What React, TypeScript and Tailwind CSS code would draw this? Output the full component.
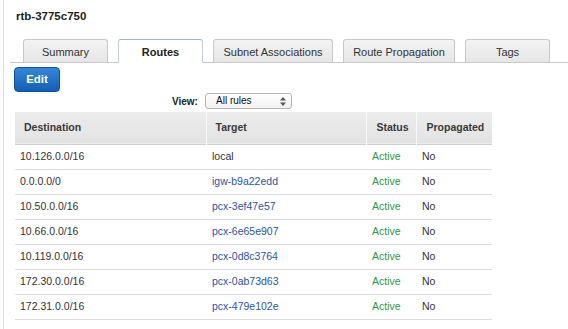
const font = { fontFamily: '"Liberation Sans", Arial, sans-serif' };

const tabs = [
  { label: "Summary", w: "w-[85px]" },
  { label: "Routes", w: "w-[85px]", active: true },
  { label: "Subnet Associations", w: "w-[120px]" },
  { label: "Route Propagation", w: "w-[112px]" },
  { label: "Tags", w: "w-[85px]" },
];

const routes = [
  { dest: "10.126.0.0/16", target: "local", link: false },
  { dest: "0.0.0.0/0", target: "igw-b9a22edd", link: true },
  { dest: "10.50.0.0/16", target: "pcx-3ef47e57", link: true },
  { dest: "10.66.0.0/16", target: "pcx-6e65e907", link: true },
  { dest: "10.119.0.0/16", target: "pcx-0d8c3764", link: true },
  { dest: "172.30.0.0/16", target: "pcx-0ab73d63", link: true },
  { dest: "172.31.0.0/16", target: "pcx-479e102e", link: true },
];

function SelectArrows() {
  return (
    <svg width="6" height="9" viewBox="0 0 6 9" className="absolute right-[5px] top-[3px]">
      <path d="M3 0 L6 3.5 L0 3.5 Z" fill="#555" />
      <path d="M3 9 L6 5.5 L0 5.5 Z" fill="#555" />
    </svg>
  );
}

export default function App() {
  return (
    <div className="w-[568px] h-[329px] bg-white overflow-hidden text-[#333]" style={font}>
      <div className="ml-[3px] h-full border-l border-[#e2e2e2]">
        <div className="pl-[12px] pt-[9px] text-[11.5px] leading-[14px] font-bold text-[#222]">
          rtb-3775c750
        </div>

        <div className="ml-[6px] mt-[16px] flex items-end pl-[13px] gap-[10px] border-b border-[#c9c9c9] h-[24px]">
          {tabs.map((t) =>
            t.active ? (
              <div
                key={t.label}
                className={`${t.w} h-[24px] -mb-px bg-white border border-b-0 border-[#c6cdd6] border-t-[#9fb6cf] rounded-t-[3px] flex items-center justify-center pt-[2px] text-[11px] font-bold text-[#222]`}
              >
                {t.label}
              </div>
            ) : (
              <div
                key={t.label}
                className={`${t.w} h-[23px] bg-gradient-to-b from-[#f3f3f3] to-[#e6e6e6] border border-b-0 border-[#c9c9c9] rounded-t-[3px] flex items-center justify-center pt-[2px] text-[11px] text-[#333]`}
              >
                {t.label}
              </div>
            ),
          )}
        </div>

        <div className="ml-[10px] mt-[4px]">
          <button className="w-[46px] h-[25px] rounded-[4px] border border-[#0d519e] bg-gradient-to-b from-[#3487dc] to-[#115fb6] text-white text-[11.5px] font-bold flex items-center justify-center">
            Edit
          </button>
        </div>

        <div className="flex items-center mt-[1px] h-[16px] pl-[168px]">
          <span className="text-[10px] font-bold text-[#222] w-[33px]">View:</span>
          <div className="relative w-[87px] h-[16px] border border-[#b5b5b5] rounded-[3px] bg-gradient-to-b from-white to-[#f2f2f2] text-[10px] leading-[14px] pl-[10px] text-[#111]">
            All rules
            <SelectArrows />
          </div>
        </div>

        <table className="ml-[11px] mt-[3px] w-[477px] border-collapse table-fixed text-[10.5px]">
          <colgroup>
            <col className="w-[191px]" />
            <col className="w-[160px]" />
            <col className="w-[50px]" />
            <col className="w-[76px]" />
          </colgroup>
          <thead>
            <tr className="h-[32px] bg-gradient-to-b from-[#ececec] to-[#e3e3e3] border-b border-[#cfcfcf] text-[#3a3a3a] font-bold text-left">
              <th className="pl-[9px] font-bold">Destination</th>
              <th className="pl-[9px] font-bold border-l border-[#f9f9f9]">Target</th>
              <th className="pl-[10px] font-bold border-l border-[#f9f9f9]">Status</th>
              <th className="pl-[10px] font-bold border-l border-[#f9f9f9]">Propagated</th>
            </tr>
          </thead>
          <tbody>
            {routes.map((r) => (
              <tr key={r.dest} className="h-[25px] border-b border-[#dddddd]">
                <td className="pl-[5px]">{r.dest}</td>
                <td className={`pl-[6px] ${r.link ? "text-[#2b55a6]" : "text-[#333]"}`}>{r.target}</td>
                <td className="pl-[6px] text-[#2e9a45]">Active</td>
                <td className="pl-[6px]">No</td>
              </tr>
            ))}
          </tbody>
        </table>
      </div>
    </div>
  );
}
